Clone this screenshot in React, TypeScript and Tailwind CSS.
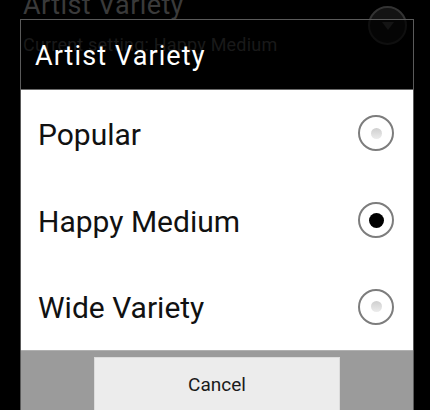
const options = [
  { label: "Popular", checked: false },
  { label: "Happy Medium", checked: true },
  { label: "Wide Variety", checked: false },
];

function Radio({ checked }: { checked: boolean }) {
  return (
    <div className="w-[36px] h-[36px] rounded-full border-2 border-[#7d7d7d] flex items-center justify-center bg-white">
      {checked ? (
        <div className="w-[15px] h-[15px] rounded-full bg-black" />
      ) : (
        <div className="w-[11px] h-[11px] rounded-full bg-gradient-to-b from-[#cfcfcf] to-[#ececec]" />
      )}
    </div>
  );
}

export default function App() {
  return (
    <div className="relative w-[430px] h-[410px] overflow-hidden bg-black font-['Roboto',sans-serif]">
      {/* preference row behind the dialog */}
      <div className="flex items-start justify-between pl-[23px] pr-[23px]">
        <div>
          <div className="mt-[-8px] text-[27px] tracking-[0.4px] leading-none text-[#3a3a3a]">Artist Variety</div>
          <div className="mt-[17px] text-[18px] tracking-[0.2px] leading-none text-[#555]">Current setting: Happy Medium</div>
        </div>
        <div className="mt-[6px] w-[39px] h-[39px] rounded-full border-2 border-[#333] bg-[#131313] flex items-center justify-center">
          <svg width="14" height="10" viewBox="0 0 14 10">
            <path d="M1 1 L13 1 L7 9 Z" fill="#444" />
          </svg>
        </div>
      </div>

      {/* dialog */}
      <div className="absolute left-[20px] top-[19px] w-[394px] h-[400px] border border-[#5a5a5a] flex flex-col">
        <div className="h-[70px] flex items-center pl-[14px] pt-[4px] bg-black/70 border-b border-[#6a6a6a]">
          <span className="text-[27px] tracking-[1.1px] text-white leading-none">Artist Variety</span>
        </div>
        <div className="h-[260px] bg-white flex flex-col">
          {options.map((o) => (
            <div key={o.label} className="flex-1 flex items-center justify-between pl-[17px] pr-[19px]">
              <span className="text-[30px] text-[#111] leading-none pt-[3px]">{o.label}</span>
              <Radio checked={o.checked} />
            </div>
          ))}
        </div>
        <div className="flex-1 bg-[#9b9b9b] border-t border-[#b0b0b0] flex justify-center pt-[6px]">
          <div className="w-[246px] h-[60px] bg-[#ececec] border border-[#dcdcdc] flex items-start justify-center pt-[17px]">
            <span className="text-[19px] text-[#1a1a1a] leading-none">Cancel</span>
          </div>
        </div>
      </div>
    </div>
  );
}
